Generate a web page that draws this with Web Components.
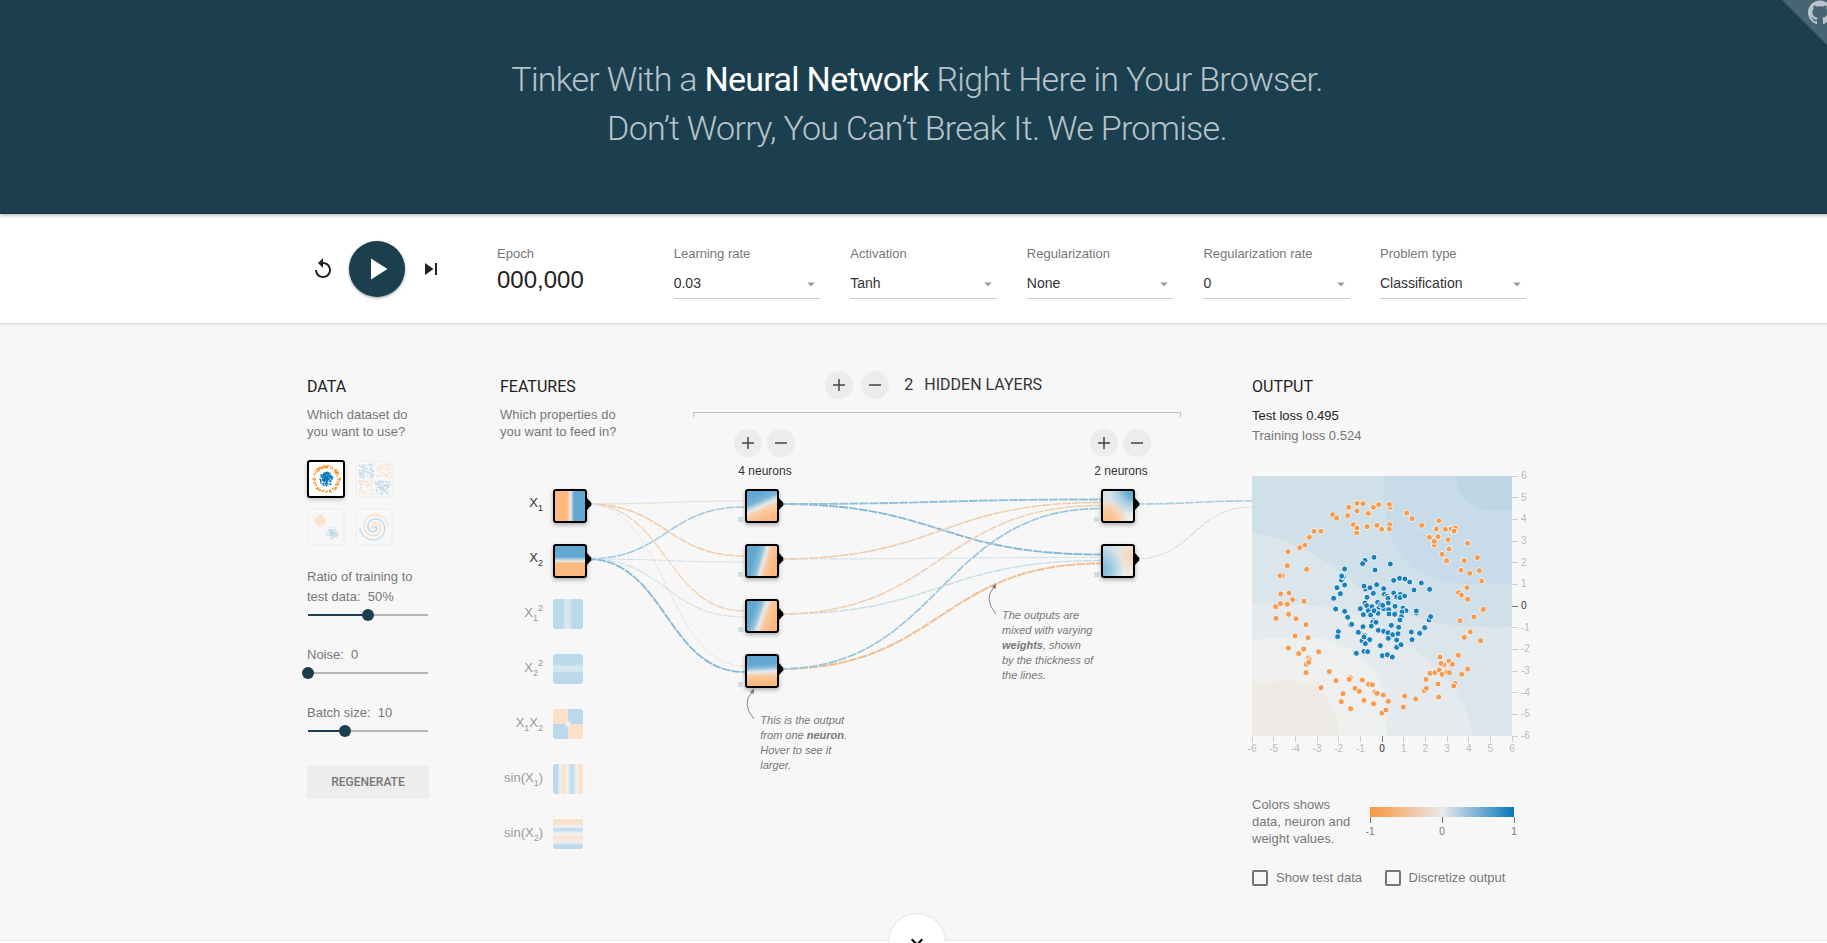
<!DOCTYPE html>
<html lang="en">
<head>
<meta charset="utf-8">
<title>Neural Network Playground</title>
<style>
html{overflow:hidden;background:#f7f7f7}
body{margin:0;width:1834px;height:943px;overflow:hidden;display:flex;flex-direction:column;font-family:"Liberation Sans",Arial,sans-serif;font-size:13px;color:#777}
main{display:flex;padding-left:307px;flex:1;min-height:0;background:#f7f7f7}
</style>
</head>
<body>
<page-header>Tinker With a <b>Neural Network</b> Right Here in Your Browser.<br>Don’t Worry, You Can’t Break It. We Promise.</page-header>
<top-controls>
  <drop-select label="Learning rate">0.03</drop-select>
  <drop-select label="Activation">Tanh</drop-select>
  <drop-select label="Regularization">None</drop-select>
  <drop-select label="Regularization rate">0</drop-select>
  <drop-select label="Problem type">Classification</drop-select>
</top-controls>
<main>
  <data-column></data-column>
  <network-diagram></network-diagram>
  <output-column></output-column>
</main>
<more-button></more-button>
<script>
function define(name, html, setup) {
  const t = document.createElement('template');
  t.innerHTML = html;
  customElements.define(name, class extends HTMLElement {
    constructor() { super(); this.attachShadow({mode: 'open'}); }
    connectedCallback() {
      if (this.shadowRoot.childNodes.length) return;
      this.shadowRoot.append(t.content.cloneNode(true));
      if (setup) setup(this, this.shadowRoot);
    }
  });
}
let seed = 7;
function rnd() { seed = (seed * 16807) % 2147483647; return seed / 2147483647; }
function gauss() { return rnd() + rnd() + rnd() + rnd() - 2; }

define('page-header', `<style>
:host{display:block;position:relative;z-index:2;height:214px;flex:none;box-sizing:border-box;padding-top:55px;background:#1b3f4f;border-bottom:1px solid #183847;box-shadow:0 1px 4px rgba(0,0,0,.35);overflow:visible}
h1{margin:0;font:300 34px/49.3px Roboto,sans-serif;letter-spacing:-.0205em;text-align:center;color:rgba(255,255,255,.7)}
::slotted(b){font-weight:400;color:#fff}
svg{position:absolute;right:0;top:0}
</style><h1><slot></slot></h1>
<svg width="52" height="52" viewBox="0 0 52 52"><path d="M0 0H52V52z" fill="#466472"/><path transform="translate(26 .5) scale(1.5)" fill="#b9c5cc" fill-rule="evenodd" d="M8 0C3.58 0 0 3.58 0 8c0 3.54 2.29 6.53 5.47 7.59.4.07.55-.17.55-.38 0-.19-.01-.82-.01-1.49-2.01.37-2.53-.49-2.69-.94-.09-.23-.48-.94-.82-1.13-.28-.15-.68-.52-.01-.53.63-.01 1.08.58 1.23.82.72 1.21 1.87.87 2.33.66.07-.52.28-.87.51-1.07-1.78-.2-3.64-.89-3.64-3.95 0-.87.31-1.59.82-2.15-.08-.2-.36-1.02.08-2.12 0 0 .67-.21 2.2.82.64-.18 1.32-.27 2-.27s1.36.09 2 .27c1.53-1.04 2.2-.82 2.2-.82.44 1.1.16 1.92.08 2.12.51.56.82 1.27.82 2.15 0 3.07-1.87 3.75-3.65 3.95.29.25.54.73.54 1.48 0 1.07-.01 1.93-.01 2.2 0 .21.15.46.55.38A8.01 8.01 0 0 0 16 8c0-4.42-3.58-8-8-8z"/></svg>`);

define('top-controls', `<style>
:host{display:flex;position:relative;z-index:1;flex:none;height:110px;box-sizing:border-box;padding-left:311px;background:#fff;border-bottom:1px solid #d9d9d9;box-shadow:0 1px 3px rgba(0,0,0,.08)}
.play{display:flex;align-items:center;height:56px;margin-top:27px;width:186px}
.play svg{display:block;flex:none}
.disc{width:56px;height:56px;border-radius:50%;background:#1b3f4f;margin:0 14px;display:flex;align-items:center;justify-content:center;box-shadow:0 1px 3px rgba(0,0,0,.4)}
.epoch{width:176.7px;padding-top:32px;line-height:15px}
.num{font-size:24px;line-height:28px;color:#222;margin-top:5px}
.selects{display:flex;gap:30.2px}
</style>
<div class="play"><svg width="24" height="24" viewBox="0 0 24 24" fill="#222"><path d="M12 5V1L7 6l5 5V7c3.31 0 6 2.69 6 6s-2.69 6-6 6-6-2.69-6-6H4c0 4.42 3.58 8 8 8s8-3.58 8-8-3.58-8-8-8z"/></svg>
<div class="disc"><svg width="36" height="36" viewBox="0 0 24 24" fill="#fff"><path d="M8 5v14l11-7z"/></svg></div>
<svg width="24" height="24" viewBox="0 0 24 24" fill="#222"><path d="M6 18l8.5-6L6 6v12zM16 6v12h2V6h-2z"/></svg></div>
<div class="epoch">Epoch<div class="num">000,000</div></div>
<div class="selects"><slot></slot></div>`);

define('drop-select', `<style>
:host{display:block;width:146.4px;padding-top:32px;line-height:15px}
.box{display:flex;justify-content:space-between;align-items:center;height:29px;padding-top:1px;margin-top:7px;border-bottom:1px solid #ccc;font-size:14px;color:#333;line-height:17px}
svg{display:block;margin-right:0;margin-top:1px}
</style><div class="label"></div><div class="box"><slot></slot><svg width="18" height="18" viewBox="0 0 24 24" fill="#999"><path d="M7 10l5 5 5-5z"/></svg></div>`,
(el, r) => { r.querySelector('.label').textContent = el.getAttribute('label'); });

define('data-thumb', `<style>
:host{display:block;box-sizing:border-box;width:38px;height:38px;border:2px solid #f2f2f2;border-radius:3px}
:host([active]){border-color:#000;background:#fff;box-shadow:0 2px 4px rgba(0,0,0,.2)}
svg{display:block}
</style><svg width="34" height="34" viewBox="2 2 34 34"></svg>`,
(el, r) => {
  const on = el.hasAttribute('active'), B = on ? '#0877bd' : '#c3dcea', O = on ? '#f59322' : '#fbdfc9';
  let s = '';
  const dot = (x, y, c, d = 1.4) => { s += `<rect x="${(x - d / 2).toFixed(1)}" y="${(y - d / 2).toFixed(1)}" width="${d}" height="${d}" fill="${c}"/>`; };
  const k = el.getAttribute('kind');
  if (k === 'circle') {
    for (let i = 0; i < 110; i++) { const a = rnd() * 6.283, q = 11 + rnd() * 3; dot(19.2 + q * Math.cos(a), 19.2 + q * Math.sin(a), O, 1.3); }
    for (let i = 0; i < 130; i++) { const a = rnd() * 6.283, q = rnd() * 7; dot(19.2 + q * Math.cos(a), 19.2 + q * Math.sin(a), B); }
  } else if (k === 'xor') {
    for (let i = 0; i < 220; i++) { let x = (rnd() * 2 - 1) * 14.4, y = (rnd() * 2 - 1) * 14.4; x += Math.sign(x); y += Math.sign(y); dot(19.5 + x, 19.5 + y, x * y > 0 ? B : O, 1.4); }
  } else if (k === 'gauss') {
    for (let i = 0; i < 110; i++) { dot(13.7 + gauss() * 4.2, 13 + gauss() * 4.2, O, 1.2); dot(25.5 + gauss() * 4.2, 25.3 + gauss() * 4.2, B, 1.2); }
  } else {
    for (let i = 4; i < 150; i++) for (const [d, c] of [[0, B], [Math.PI, O]]) { const q = i / 150 * 14.5, t = 1.75 * i / 150 * 6.283 + d; dot(19.3 + q * Math.sin(t), 19.3 - q * Math.cos(t), c, 1.25); }
  }
  // The blue quadrants of the xor set are upper left and lower right.
  r.querySelector('svg').innerHTML = s;
});

define('range-slider', `<style>
:host{display:block;width:122px;line-height:20px;height:58px}
.track{position:relative;height:2px;margin:7px 1px 0 1px;background:linear-gradient(90deg,#1b3f4f var(--v),#b5b5b5 var(--v))}
.track i{position:absolute;left:var(--v);top:-5px;width:12px;height:12px;margin-left:-6px;border-radius:50%;background:#1b3f4f}
</style><slot></slot><div class="track"><i></i></div>`);

define('data-column', `<style>
:host{display:block;width:193px;flex:none;padding-top:53px}
h4{margin:0;font:400 16px/20px Roboto,sans-serif;color:#222}
p{margin:9px 0 0;line-height:17px}
.thumbs{display:grid;grid-template-columns:38px 38px;gap:10px;margin:20px 0 21px}
.b{font:500 12px/34px Roboto,sans-serif;width:122px;height:34px;background:#ededed;border-radius:3px;text-align:center;color:#777;margin-top:4px}
</style><h4>DATA</h4><p>Which dataset do<br>you want to use?</p>
<div class="thumbs"><data-thumb kind="circle" active></data-thumb><data-thumb kind="xor"></data-thumb><data-thumb kind="gauss"></data-thumb><data-thumb kind="spiral"></data-thumb></div>
<range-slider style="--v:50%;height:78px">Ratio of training to<br>test data: &nbsp;50%</range-slider>
<range-slider style="--v:0%">Noise: &nbsp;0</range-slider>
<range-slider style="--v:31%">Batch size: &nbsp;10</range-slider>
<div class="b">REGENERATE</div>`);

define('round-button', `<style>
:host{display:inline-flex;width:28px;height:28px;border-radius:50%;background:#ececec;align-items:center;justify-content:center}
svg{display:block}
</style><svg width="12" height="12" viewBox="0 0 12 12" stroke="#444" stroke-width="1.5"><path/></svg>`,
(el, r) => r.querySelector('path').setAttribute('d', el.hasAttribute('minus') ? 'M0 6H12' : 'M0 6H12M6 0V12'));

const W = '#e8eaeb', O = '#fbb97f', B = '#61a7d2', lb = '#bcd9ec', lo = '#fbe0ca', lw = '#eff1f2';
const heats = {
  x1: `linear-gradient(90deg,${O} 40%,${W} 52%,${B} 64%)`,
  x2: `linear-gradient(180deg,${B} 36%,${W} 50%,${O} 58%)`,
  x1s: `linear-gradient(90deg,${lb} 34%,#d8e7ef 42%,#d8e7ef 56%,${lb} 64%)`,
  x2s: `linear-gradient(180deg,${lb} 34%,#d8e7ef 42%,#d8e7ef 56%,${lb} 64%)`,
  x1x2: `radial-gradient(circle at 50% 50%,${lw} 6%,rgba(239,241,242,0) 18%),conic-gradient(${lb} 88deg,${lo} 92deg 178deg,${lb} 182deg 268deg,${lo} 272deg 358deg,${lb})`,
  s1: `linear-gradient(90deg,${lb} 14%,${lw} 24%,${lo} 34%,${lw} 48%,${lb} 62%,${lw} 80%,${lo} 88%)`,
  s2: `linear-gradient(180deg,${lo} 14%,${lw} 26%,${lb} 35%,${lw} 48%,${lo} 62%,${lw} 76%,${lb} 88%)`,
  n0: `linear-gradient(156deg,${B} 18%,#7ab4d7 35%,${W} 50%,#f8cfa8 60%,${O} 85%)`,
  n1: `linear-gradient(106deg,${B} 25%,#8bbedb 42%,${W} 54%,#f9c99c 64%,${O} 85%)`,
  n2: `linear-gradient(110deg,${B} 22%,#8bbedb 38%,${W} 50%,#f9c99c 63%,${O} 82%)`,
  n3: `linear-gradient(177deg,${B} 28%,#8bbedb 40%,${W} 52%,#f9c99c 68%,${O} 88%)`,
  m0: `radial-gradient(circle at 100% 0,#63acd4 14%,rgba(140,192,220,.75) 30%,rgba(232,234,235,0) 56%),radial-gradient(circle at 12% 100%,#fcc38c 15%,rgba(250,208,166,.85) 34%,rgba(232,234,235,0) 56%),linear-gradient(135deg,#d3e2ea,#eef0f0)`,
  m1: `radial-gradient(circle at 0 78%,#83bddb 5%,rgba(131,189,219,0) 56%),radial-gradient(circle at 100% 30%,#f6d5b6 5%,rgba(245,220,198,0) 50%),linear-gradient(100deg,#c2dbe7 10%,#dfe8ec 50%,#eeeeec 70%,#efe8e0)`
};
define('heat-node', `<style>
:host{display:block;position:absolute;width:30px;height:30px}
.c{width:30px;height:30px;border-radius:3px}
:host([active]) .c{border:2px solid #000;box-shadow:0 2px 4px rgba(0,0,0,.3)}
svg{display:none;position:absolute;left:34px;top:9px}
:host([active]) svg{display:block}
</style><div class="c"></div><svg width="5" height="12" viewBox="0 0 5 12"><path d="M0 0L4.3 4.7V7.3L0 12z"/></svg>`,
(el, r) => { const c = r.querySelector('.c'); c.style.background = heats[el.getAttribute('heat')]; });

define('network-diagram', `<style>
:host{display:block;position:relative;width:752px;flex:none;height:619px}
svg.links{position:absolute;left:0;top:0;pointer-events:none}
.head{display:flex}
.feat{width:193px;padding-top:53px}
h4{margin:0;font:400 16px/20px Roboto,sans-serif;color:#222}
p{margin:9px 0 0;line-height:17px}
.hidden{margin-top:47px;width:488px;height:41px;box-sizing:border-box;padding-left:132px;display:flex;align-items:flex-start}
.hidden round-button{margin-right:8px}
.hidden span{font:400 16px/28px Roboto,sans-serif;color:#333;margin-left:7.3px}
.hidden span+span{margin-left:11px}
.ctl{position:absolute;width:62px;display:flex;flex-wrap:wrap;gap:5px;justify-content:center}
.ctl div{font-size:12px;line-height:14px;color:#333;margin:2px -1px 0 1px;width:62px;text-align:center}
.lab{position:absolute;right:709px;line-height:16px;color:#999;white-space:nowrap}
.lab.on{color:#333}
.lab sub,.lab sup{font-size:9px;line-height:0;vertical-align:-4px}
.lab sup{vertical-align:6px}
.note{position:absolute;font:italic 11px/15px "Liberation Sans",Arial,sans-serif;color:#777;white-space:nowrap}
</style>
<svg class="links" width="752" height="619" viewBox="500 324 752 619" fill="none"></svg>
<div class="head"><div class="feat"><h4>FEATURES</h4><p>Which properties do<br>you want to feed in?</p></div>
<div class="hidden"><round-button></round-button><round-button minus></round-button><span>2</span><span>HIDDEN LAYERS</span></div></div>
<div class="ctl" style="left:233px;top:105px"><round-button></round-button><round-button minus></round-button><div>4 neurons</div></div>
<div class="ctl" style="left:589px;top:105px"><round-button></round-button><round-button minus></round-button><div>2 neurons</div></div>
<div class="items"></div>
<div class="note" style="left:502px;top:284px">The outputs are<br>mixed with varying<br><b>weights</b>, shown<br>by the thickness of<br>the lines.</div>
<div class="note" style="left:260.3px;top:389px">This is the output<br>from one <b>neuron</b>.<br>Hover to see it<br>larger.</div>`,
(el, r) => {
  const labels = ['X<sub>1</sub>', 'X<sub>2</sub>', 'X<sub>1</sub><sup>2</sup>', 'X<sub>2</sub><sup>2</sup>', 'X<sub>1</sub>X<sub>2</sub>', 'sin(X<sub>1</sub>)', 'sin(X<sub>2</sub>)'];
  let h = '';
  ['x1', 'x2', 'x1s', 'x2s', 'x1x2', 's1', 's2'].forEach((k, i) => {
    const top = 165 + 55 * i;
    h += `<heat-node heat="${k}" ${i < 2 ? 'active' : ''} style="left:53px;top:${top}px"></heat-node><div class="lab ${i < 2 ? 'on' : ''}" style="top:${top + 6}px">${labels[i]}</div>`;
  });
  for (let i = 0; i < 4; i++) h += `<heat-node heat="n${i}" active style="left:245px;top:${165 + 55 * i}px"></heat-node>`;
  for (let i = 0; i < 2; i++) h += `<heat-node heat="m${i}" active style="left:601px;top:${165 + 55 * i}px"></heat-node>`;
  r.querySelector('.items').innerHTML = h;
  const y = i => 504 + 55 * i;
  const L = [
    [587, 0, 745, 0, 0, 2, '#e9ddd0', 1.2], [587, 0, 745, 1, 0, 2, '#f0cba8', 1.5], [587, 0, 745, 2, 0, 2, '#efd1b3', 1.3], [587, 0, 745, 3, 0, 2, '#e6e5e3', 1],
    [587, 1, 745, 0, 1, 2, '#a5cae0', 1.6], [587, 1, 745, 1, 1, 2, '#d3e0e8', 1.1], [587, 1, 745, 2, 1, 2, '#cfdfe8', 1.1], [587, 1, 745, 3, 1, 2, '#88bad8', 1.9],
    [779, 0, 1101, 1, 0, 4, '#86b9d8', 1.9], [779, 0, 1101, 0, 0, 4, '#90c0da', 1.9],
    [779, 1, 1101, 1, 1, 4, '#d5e1e8', 1.1], [779, 1, 1101, 0, 1, 4, '#f0cba8', 1.5],
    [779, 2, 1101, 1, 2, 4, '#c6dae5', 1.3], [779, 2, 1101, 0, 2, 4, '#f0cdad', 1.5],
    [779, 3, 1101, 1, 3, 4, '#f1bf91', 2], [779, 3, 1101, 0, 3, 4, '#9dc6dd', 1.7],
    [1135, 0, 1252, 0, 0, 2, '#a8cce0', 1.6], [1135, 1, 1252, 0, 1, 2, '#d3dfe5', 1.1]];
  let s = '<path d="M693.5 417V412.5H1180.5V417" stroke="#c0c0c0"/>';
  for (const [x0, a, x1, b, i, n, c, w] of L) {
    const m = (x0 + x1) / 2, yb = y(b) + (i - (n - 1) / 2) / n * 12;
    s += `<path d="M${x0} ${y(a)}C${m} ${y(a)} ${m} ${yb} ${x1} ${yb}" stroke="${c}" stroke-width="${w}" stroke-dasharray="9 1"/>`;
  }
  for (let i = 0; i < 4; i++) s += `<rect x="738" y="${517 + 55 * i}" width="5" height="5" fill="#cfdfe8"/>`;
  for (let i = 0; i < 2; i++) s += `<rect x="1094" y="${517 + 55 * i}" width="5" height="5" fill="#cfdfe8"/>`;
  for (const [x, yy] of [[996, 584], [754, 689]])
    s += `<path d="M${x} ${yy + 30}Q${x - 13} ${yy + 15} ${x - 2} ${yy + 3}" stroke="#888"/><path d="M${x} ${yy - .5}L${x - 4} ${yy + 3}L${x - .4} ${yy + 5}z" fill="#777"/>`;
  r.querySelector('svg').innerHTML = s;
});

define('output-plot', `<style>
:host{display:block;width:290px;height:290px}
svg{display:block;overflow:visible}
text{font:10px "Liberation Sans",Arial,sans-serif;fill:#bbb}
text.z{fill:#333}
</style><svg width="290" height="290" viewBox="0 0 290 290"></svg>`,
(el, r) => {
  const orange = '351,130 369,131 326,142 400,142 416,134 450,142 448,133 351,153 385,160 278,164 290,174 323,167 340,194 350,218 351,204 381,200 411,196 425,208 449,194 448,207 222,214 243,214 208,232 194,255 179,263 144,275 142,317 200,328 127,347 120,347 122,402 147,399 158,419 192,424 107,440 121,431 142,433 108,475 146,463 168,476 198,494 165,528 204,533 145,564 191,567 176,581 236,575 205,594 208,600 199,613 206,607 198,638 268,635 288,662 243,683 309,701 304,725 332,746 331,653 328,658 345,685 358,694 367,660 386,673 397,674 405,696 411,700 430,705 372,721 401,731 445,724 426,759 438,750 490,741 494,708 527,717 552,692 559,685 558,658 570,640 585,638 594,672 596,711 598,630 606,643 612,614 603,610 600,591 627,603 637,613 620,637 628,638 655,586 683,627 665,643 645,670 641,678 691,516 722,542 673,532 660,482 702,471 728,452 730,448 683,418 656,398 664,405 681,383 725,363 689,340 663,331 718,332 673,302 712,293 683,250 620,302 606,283 627,267 583,255 583,244 568,232 594,230 624,239 589,207 616,208 597,182 634,207 646,204 642,213 545,196 516,176 500,159';
  const blue = '402,292 375,301 368,311 451,312 314,327 405,330 304,360 310,350 305,348 314,375 291,383 301,401 281,415 287,447 314,454 323,472 295,515 293,530 332,495 335,493 355,517 349,580 372,574 383,575 376,387 372,378 390,383 410,374 431,386 400,400 381,412 375,429 380,437 361,446 370,464 385,452 396,440 392,465 413,427 417,442 414,460 402,452 422,434 431,446 428,436 433,403 441,409 444,415 445,429 446,449 447,462 461,361 479,355 495,357 509,366 544,369 569,388 522,390 461,399 470,411 481,403 480,413 494,408 465,439 466,459 464,463 489,444 498,452 486,456 484,470 480,480 529,459 529,453 567,480 572,470 554,503 539,520 516,539 514,516 454,496 476,502 401,482 398,487 408,487 394,498 369,500 415,511 431,514 444,518 458,524 474,521 445,535 470,540 389,539 374,527 366,542 372,531 376,551 421,557 470,562 483,554 427,587 442,584 457,591';
  let s = `<svg width="260" height="260" viewBox="36 48 780 780" style="overflow:hidden"><rect x="36" y="48" width="780" height="780" fill="#dbe6ec"/>
<path fill="#cfe0e8" d="M36 48H816V500C740 504 680 499 640 495C560 488 480 455 430 430C370 395 320 350 280 318C200 270 130 228 36 220z"/>
<path fill="#c7dbe8" d="M433 48H816V368C770 374 740 376 700 375C620 372 570 355 520 325C470 285 447 230 438 180C430 140 430 90 433 48z"/>
<path fill="#bdd6e4" d="M645 48H816V151H750C700 148 675 120 660 95C650 75 650 60 645 48z"/>
<path fill="#e4eaee" d="M36 432C130 430 230 434 310 450C400 475 470 525 530 575C600 632 690 710 697 828H36z"/>
<path fill="#eeefef" d="M36 541C100 532 180 531 250 536C330 550 400 620 420 665C440 715 441 770 441 828H36z"/>
<path fill="#eeeae6" d="M36 670C90 664 150 660 200 668C260 690 295 750 295 828H36z"/>`;
  for (const [l, c] of [[orange, '#f99a4a'], [blue, '#1781c0']]) for (const p of l.split(' ')) { const [x, y] = p.split(','); s += `<circle cx="${x}" cy="${y}" r="9" fill="${c}" stroke="#f1f3f4" stroke-width="3"/>`; }
  s += '</svg>';
  for (let v = -6; v <= 6; v++) {
    const p = (v + 6) * 260 / 12, q = 260 - p, z = v === 0 ? ' class="z"' : '', c = v === 0 ? '#777' : '#ccc', t = Math.floor(p) + .5, u = Math.floor(q) + .5;
    s += `<path d="M${t} 260V266M260 ${u}H266" stroke="${c}"/><text x="${p}" y="276" text-anchor="middle"${z}>${v}</text><text x="269" y="${q + 3}"${z}>${v}</text>`;
  }
  r.querySelector('svg').innerHTML = s;
});

define('check-box', `<style>
:host{display:flex;align-items:center;gap:8px;line-height:16px}
i{box-sizing:border-box;width:16px;height:16px;border:2px solid #757575;border-radius:2px}
</style><i></i><slot></slot>`);

define('output-column', `<style>
:host{display:block;width:300px;padding-top:53px}
h4{margin:0;font:400 16px/20px Roboto,sans-serif;color:#222}
.loss{margin-top:9px;line-height:20px}
.loss div:first-child{color:#222}
output-plot{margin-top:30px}
.legend{display:flex;margin-top:30px;line-height:17px;white-space:nowrap}
.legend p{margin:0;width:118px}
.scale{width:144px;padding-top:11px}
.bar{height:10px;background:linear-gradient(90deg,#fb963d,#e8eaeb 50%,#0877bd)}
.ticks{display:flex;justify-content:space-between;margin-right:-1px}
.ticks i{width:1px;height:6px;background:#777}
.nums{display:flex;justify-content:space-between;font-size:10px;line-height:12px;margin:3px -5px 0 -5px}
.nums span{width:10px;text-align:center}
.checks{display:flex;gap:22.5px;margin-top:23px}
</style><h4>OUTPUT</h4><div class="loss"><div>Test loss 0.495</div><div>Training loss 0.524</div></div>
<output-plot></output-plot>
<div class="legend"><p>Colors shows<br>data, neuron and<br>weight values.</p><div class="scale"><div class="bar"></div><div class="ticks"><i></i><i></i><i></i></div><div class="nums"><span>-1</span><span>0</span><span>1</span></div></div></div>
<div class="checks"><check-box>Show test data</check-box><check-box>Discretize output</check-box></div>`);

define('more-button', `<style>
:host{display:block;position:relative;flex:none;height:2px;background:#fff;box-shadow:0 0 2px rgba(0,0,0,.2)}
div{position:absolute;left:889px;top:-27.5px;width:56px;height:56px;border-radius:50%;background:#fff;box-shadow:0 0 2px rgba(0,0,0,.2);display:flex;align-items:center;justify-content:center}
</style><div><svg width="24" height="24" viewBox="0 0 24 24"><path d="M7.41 8.59L12 13.17l4.59-4.58L18 10l-6 6-6-6z"/></svg></div>`);
</script>
</body>
</html>
